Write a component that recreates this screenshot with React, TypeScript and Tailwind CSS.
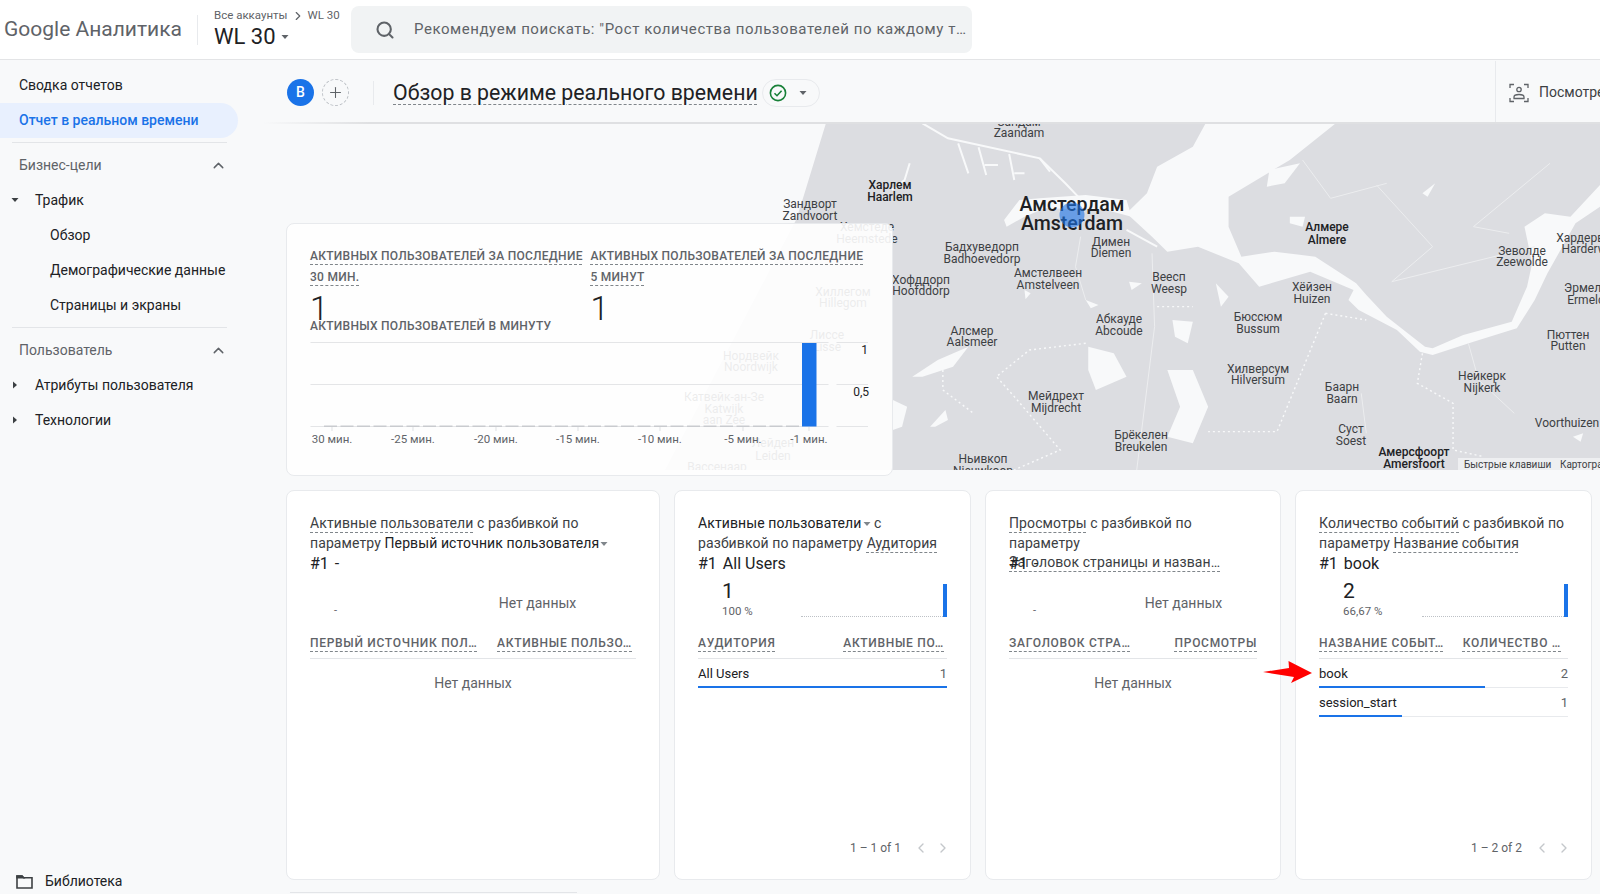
import type { ReactNode } from "react";
import { ChevronLeft, ChevronRight, ChevronUp, Plus, Search } from "lucide-react";

const BLUE = "#1a73e8";

function Caret({ right = false }: { right?: boolean }) {
  return (
    <svg width="8" height="8" viewBox="0 0 8 8" className="inline-block shrink-0" fill="currentColor">
      {right ? <path d="M2 0.5 6 4 2 7.5z" /> : <path d="M0.5 2h7L4 6z" />}
    </svg>
  );
}

function Dashed({ children }: { children: ReactNode }) {
  return (
    <span className="underline decoration-dashed decoration-[#80868b] decoration-1 underline-offset-[4px]">
      {children}
    </span>
  );
}

/* ── Sidebar ─────────────────────────────────────────────────────── */
function NavRow({
  children,
  indent,
  caret,
}: {
  children: ReactNode;
  indent: string;
  caret?: "down" | "right";
}) {
  return (
    <div className={`relative flex h-[35px] items-center text-[#202124] ${indent}`}>
      {caret && (
        <span className="absolute left-[11px] top-[13px] flex text-[#3c4043]">
          <Caret right={caret === "right"} />
        </span>
      )}
      {children}
    </div>
  );
}

function NavHeading({ children }: { children: ReactNode }) {
  return (
    <div className="flex h-[35px] items-center justify-between pl-[19px] pr-[35px] text-[#5f6368]">
      {children}
      <ChevronUp size={17} strokeWidth={2} className="text-[#5f6368]" />
    </div>
  );
}

function Sidebar() {
  return (
    <aside className="flex w-[262px] shrink-0 flex-col pt-[8px] font-['Roboto',sans-serif] text-[14px]">
      <NavRow indent="pl-[19px]">Сводка отчетов</NavRow>
      <div className="flex h-[35px] w-[238px] items-center rounded-r-[18px] bg-[#e8f0fe] pl-[19px] font-medium text-[#1a73e8]">
        Отчет в реальном времени
      </div>
      <div className="ml-[12px] mt-[4px] mb-[5px] h-px w-[215px] bg-[#e3e5e8]" />
      <NavHeading>Бизнес-цели</NavHeading>
      <NavRow indent="pl-[35px]" caret="down">Трафик</NavRow>
      <NavRow indent="pl-[50px]">Обзор</NavRow>
      <NavRow indent="pl-[50px]">Демографические данные</NavRow>
      <NavRow indent="pl-[50px]">Страницы и экраны</NavRow>
      <div className="ml-[12px] mt-[4px] mb-[5px] h-px w-[215px] bg-[#e3e5e8]" />
      <NavHeading>Пользователь</NavHeading>
      <NavRow indent="pl-[35px]" caret="right">Атрибуты пользователя</NavRow>
      <NavRow indent="pl-[35px]" caret="right">Технологии</NavRow>
      <div className="mt-auto mb-[3px] flex h-[20px] items-center gap-[12px] pl-[16px] text-[#202124]">
        <svg width="17" height="15" viewBox="0 0 17 15" fill="none" stroke="#3c4043" strokeWidth="1.6">
          <path d="M1 2h5l1.6 1.8H16V14H1z" />
          <path d="M1 2h5l1.6 1.8H1z" fill="#3c4043" />
        </svg>
        Библиотека
      </div>
    </aside>
  );
}

/* ── Map ─────────────────────────────────────────────────────────── */
type MapLabel = [string, string, number, number, number, number];

const LABELS: MapLabel[] = [
  ["Зандам", "Zaandam", 1019, 122, 133, 0],
  ["Харлем", "Haarlem", 890, 185, 197, 1],
  ["Зандворт", "Zandvoort", 810, 204, 216, 0],
  ["Димен", "Diemen", 1111, 242, 253, 0],
  ["Бадхуведорп", "Badhoevedorp", 982, 247, 259, 0],
  ["Хофддорп", "Hoofddorp", 921, 280, 291, 0],
  ["Амстелвеен", "Amstelveen", 1048, 273, 285, 0],
  ["Веесп", "Weesp", 1169, 277, 289, 0],
  ["Абкауде", "Abcoude", 1119, 319, 331, 0],
  ["Алсмер", "Aalsmeer", 972, 331, 342, 0],
  ["Бюссюм", "Bussum", 1258, 317, 329, 0],
  ["Хилверсум", "Hilversum", 1258, 369, 380, 0],
  ["Мейдрехт", "Mijdrecht", 1056, 396, 408, 0],
  ["Брёкелен", "Breukelen", 1141, 435, 447, 0],
  ["Ньивкоп", "Nieuwkoop", 983, 459, 471, 0],
  ["Алмере", "Almere", 1327, 227, 240, 1],
  ["Хёйзен", "Huizen", 1312, 287, 299, 0],
  ["Зеволде", "Zeewolde", 1522, 251, 262, 0],
  ["Хардервейк", "Harderwijk", 1590, 238, 249, 0],
  ["Эрмело", "Ermelo", 1586, 288, 300, 0],
  ["Пюттен", "Putten", 1568, 335, 346, 0],
  ["Нейкерк", "Nijkerk", 1482, 376, 388, 0],
  ["Баарн", "Baarn", 1342, 387, 399, 0],
  ["Суст", "Soest", 1351, 429, 441, 0],
  ["Амерсфоорт", "Amersfoort", 1414, 452, 464, 1],
  ["Хемстеде", "Heemstede", 867, 227, 239, 0],
  ["Хиллегом", "Hillegom", 843, 292, 303, 0],
  ["Лиссе", "Lisse", 827, 335, 347, 0],
  ["Нордвейк", "Noordwijk", 751, 356, 367, 0],
  ["Лейден", "Leiden", 773, 443, 456, 0],
  ["Вассенаар", "Wassenaar", 717, 467, 479, 0],
];

function MapPanel() {
  return (
    <svg
      viewBox="640 123 960 347"
      className="absolute -top-px right-0 h-[347px] w-[960px] font-['Roboto',sans-serif]"
    >
      <path d="M826 123 804 195 796 220 665 470H1600V123z" fill="#dcdde1" />
      {/* water, plotted in a 1.96 x 3 grid from (800,60) */}
      <g transform="translate(800 60) scale(0.5102 0.3333)" fill="#f8f9fa">
        <path d="M795 190H1050L960 300 840 410 840 500 865 590 930 575 1010 590 1090 670 1110 705 1150 770 1225 860 1240 865 1300 825 1395 785 1425 680 1435 610 1420 500 1460 460 1510 470 1568 375V440L1520 490 1465 640 1440 720 1405 805 1320 845 1240 885 1215 875 1170 810 1095 750 1075 720 1085 690 1000 635 900 680 860 610 780 560 720 575 690 530 640 460 680 400 700 320 770 260z" />
        <path d="M400 480 430 420 470 415 560 405 640 420 650 470 600 450 480 445 440 470 405 500z" />
        <path d="M565 860 615 880 640 950 580 990 565 930z" />
        <path d="M220 950 270 900 330 860 300 920 240 950z" />
        <path d="M182 1020 210 1040 200 1100 182 1110z" />
        <path d="M730 780 770 785 760 850 735 830z" />
        <path d="M720 930 770 930 800 1040 770 1150 720 1130 745 1040z" />
        <path d="M960 470 990 470 985 500 960 490z" />
        <path d="M920 330 980 310 950 370 915 380z" />
        <path d="M815 670 840 710 825 740z" />
        <path d="M1220 400 1245 370 1230 410z" />
        <path d="M560 720 585 735 570 745z" />
        <path d="M255 1100 285 1050 290 1080 265 1100z" />
        <path d="M440 690 452 700 442 718z" />
        <path d="M645 665 670 670 650 690z" />
        <path d="M1515 1130 1535 1120 1530 1145z" />
        <g fill="none" stroke="#f8f9fa" strokeWidth="2">
          <path d="M240 190 290 235 470 295 520 370 545 410" vectorEffect="non-scaling-stroke" />
          <path d="M310 250 330 340M350 262 365 345M362 315H388M410 282 420 360M420 340H440M470 295 490 335" vectorEffect="non-scaling-stroke" />
          <path d="M215 310 205 360 180 390" vectorEffect="non-scaling-stroke" />
          <path d="M640 510 700 560" vectorEffect="non-scaling-stroke" />
        </g>
        <g fill="none" stroke="#ecedef" strokeWidth="1">
          <path d="M690 580 695 800 660 1230" vectorEffect="non-scaling-stroke" />
          <path d="M985 300 1040 415 1150 370M1130 375 1240 560 1160 665 1440 560" vectorEffect="non-scaling-stroke" />
          <path d="M1470 310 1320 500 1390 520M550 530 540 620 560 720" vectorEffect="non-scaling-stroke" />
          <path d="M1310 850 1330 960 1400 1060M1100 1000 1110 1120" vectorEffect="non-scaling-stroke" />
        </g>
        <g fill="none" stroke="#f8f9fa" strokeWidth="1.4" strokeDasharray="2 3">
          <path d="M1030 760 1110 780M1030 760 935 1115 800 1115" vectorEffect="non-scaling-stroke" />
          <path d="M1220 880 1210 970 1280 1030 1280 1170 1340 1190" vectorEffect="non-scaling-stroke" />
          <path d="M700 740 770 740M560 850 450 870 385 950 420 1010 510 1170 420 1230" vectorEffect="non-scaling-stroke" />
          <path d="M280 930 280 990 340 1060" vectorEffect="non-scaling-stroke" />
        </g>
      </g>

      {LABELS.map(([ru, en, x, y1, y2, strong]) => (
        <g
          key={en}
          textAnchor="middle"
          fontSize="12"
          fontWeight={strong ? 500 : 400}
          fill={strong ? "#202124" : "#3c4043"}
        >
          <text x={x} y={y1 + 4}>{ru}</text>
          <text x={x} y={y2 + 4}>{en}</text>
        </g>
      ))}
      <g textAnchor="middle" fontSize="12" fill="#3c4043">
        <text x="724" y="401">Катвейк-ан-Зе</text>
        <text x="724" y="413">Katwijk</text>
        <text x="724" y="424">aan Zee</text>
        <text x="1567" y="427">Voorthuizen</text>
      </g>
      <g textAnchor="middle" fontSize="19.5" fontWeight="500" fill="#202124">
        <text x="1072" y="211">Амстердам</text>
        <text x="1072" y="230">Amsterdam</text>
      </g>
      <circle cx="1072" cy="215" r="12.5" fill={BLUE} fillOpacity="0.6" />
      <rect x="1458" y="458" width="142" height="12" fill="#f1f2f3" fillOpacity="0.85" />
      <g fontSize="10" fill="#3c4043">
        <text x="1464" y="468">Быстрые клавиши</text>
        <text x="1560" y="468">Картографические данные</text>
      </g>
    </svg>
  );
}

/* ── Realtime card ───────────────────────────────────────────────── */
const TICKS: [string, number][] = [
  ["30 мин.", 331],
  ["-25 мин.", 412],
  ["-20 мин.", 495],
  ["-15 мин.", 577],
  ["-10 мин.", 659],
  ["-5 мин.", 742],
  ["-1 мин.", 808],
];

function MinuteChart() {
  const bars = Array.from({ length: 29 }, (_, i) => 323 + i * 16.5);
  return (
    <svg viewBox="309 336 560 112" className="block h-[112px] w-[560px] font-['Roboto',sans-serif]">
      {[342.5, 384.5, 426.5].map((y) => (
        <g key={y} stroke="#e4e5e7">
          <line x1="309.5" x2="827.5" y1={y} y2={y} />
          <line x1="835.5" x2="867" y1={y} y2={y} />
        </g>
      ))}
      {bars.map((x) => (
        <rect key={x} x={x} y="425.5" width="13" height="1.5" fill="#c9cbcf" />
      ))}
      {TICKS.map(([, x]) => (
        <line key={x} x1={x} x2={x} y1="427" y2="431" stroke="#dfe1e4" />
      ))}
      <rect x="801" y="343" width="14.5" height="83.5" fill={BLUE} />
      <g fontSize="12" fill="#202124" textAnchor="end">
        <text x="867" y="354">1</text>
        <text x="868" y="396">0,5</text>
      </g>
      <g fontSize="11.5" fill="#5f6368" textAnchor="middle">
        {TICKS.map(([label, x]) => (
          <text key={x} x={x} y="443">{label}</text>
        ))}
      </g>
    </svg>
  );
}

function CounterCol({ line1, line2 }: { line1: string; line2: string }) {
  return (
    <div>
      <div className="whitespace-nowrap text-[12px] font-medium leading-[20.5px] tracking-[0.27px] text-[#5f6368]">
        <Dashed>{line1}</Dashed>
        <br />
        <Dashed>{line2}</Dashed>
      </div>
      <div className="h-[29px] text-[33px] font-light leading-[44px] text-[#202124]">1</div>
    </div>
  );
}

function RealtimeCard() {
  return (
    <section className="relative ml-[24px] mt-[99px] h-[253px] w-[607px] rounded-lg border border-[#e8eaed] bg-white/90 px-[23px] pt-[22px]">
      <div className="grid grid-cols-[280.5px_1fr]">
        <CounterCol line1="АКТИВНЫХ ПОЛЬЗОВАТЕЛЕЙ ЗА ПОСЛЕДНИЕ" line2="30 МИН." />
        <CounterCol line1="АКТИВНЫХ ПОЛЬЗОВАТЕЛЕЙ ЗА ПОСЛЕДНИЕ" line2="5 МИНУТ" />
      </div>
      <div className="h-[20px] text-[12px] font-medium leading-[20px] tracking-[0.27px] text-[#5f6368]">
        АКТИВНЫХ ПОЛЬЗОВАТЕЛЕЙ В МИНУТУ
      </div>
      <MinuteChart />
    </section>
  );
}

/* ── Breakdown cards ─────────────────────────────────────────────── */
interface Row {
  name: string;
  value: number;
  share: number;
}

interface BreakdownProps {
  title: ReactNode;
  top: string;
  metric?: { value: string; pct: string };
  leftCol: string;
  headers: [string, string];
  headerClass?: string;
  rows: Row[];
  pager?: string;
}

function BreakdownCard({ title, top, metric, leftCol, headers, headerClass, rows, pager }: BreakdownProps) {
  return (
    <section className="flex h-[390px] flex-col rounded-lg border border-[#e8eaed] bg-white px-[23px] pt-[23px] pb-[22px] text-[#3c4043]">
      <div className="h-[40px] whitespace-nowrap text-[14px] leading-[19.7px] tracking-[0.1px]">{title}</div>
      <div className="flex h-[20px] gap-[6px] text-[16px] leading-[20px] text-[#202124]">
        <span>#1</span>
        <span>{top}</span>
      </div>
      <div className="flex h-[60px]">
        <div className={`pl-[24px] ${leftCol}`}>
          {metric ? (
            <>
              <div className="mt-[4px] text-[21px] leading-[26px] text-[#202124]">{metric.value}</div>
              <div className="text-[11.5px] leading-[14px] text-[#5f6368]">{metric.pct}</div>
            </>
          ) : (
            <div className="mt-[30px] text-[11px] leading-[14px] text-[#5f6368]">-</div>
          )}
        </div>
        {metric ? (
          <div className="mt-[10px] flex h-[33px] flex-1 items-end">
            <div className="flex-1 border-b border-dotted border-[#bdc1c6]" />
            <div className="h-[33px] w-[4px] bg-[#1a73e8]" />
          </div>
        ) : (
          <div className="mt-[19px] flex-1 text-center text-[14px] leading-[20px] text-[#5f6368]">Нет данных</div>
        )}
      </div>
      <div className={`flex h-[25px] justify-between border-b border-[#e3e5e8] text-[12px] font-medium leading-[18px] tracking-[0.7px] text-[#5f6368] ${headerClass ?? ""}`}>
        <Dashed>{headers[0]}</Dashed>
        <Dashed>{headers[1]}</Dashed>
      </div>
      {rows.length === 0 ? (
        <div className="mt-[14px] text-center text-[14px] leading-[20px] text-[#5f6368]">Нет данных</div>
      ) : (
        rows.map((r) => (
          <div key={r.name} className="relative h-[29px] border-b border-[#e8eaed] text-[13px] leading-[29px] text-[#202124]">
            <div className="flex justify-between">
              <span>{r.name}</span>
              <span className="text-[#5f6368]">{r.value}</span>
            </div>
            <div className="absolute -bottom-px left-0 h-[2px] bg-[#1a73e8]" style={{ width: `${r.share}%` }} />
          </div>
        ))
      )}
      {pager && (
        <div className="-mr-[4px] mt-auto flex items-center justify-end text-[12px] text-[#5f6368]">
          <span className="mr-[12px]">{pager}</span>
          <ChevronLeft size={16} className="mr-[6px] text-[#c4c7cb]" />
          <ChevronRight size={16} className="text-[#c4c7cb]" />
        </div>
      )}
    </section>
  );
}

const Dim = ({ children }: { children: ReactNode }) => (
  <span className="text-[#202124]">{children}</span>
);

function Cards() {
  return (
    <div className="ml-[24px] mt-[14px] grid w-[1306px] grid-cols-[374px_297px_296px_297px] gap-[14px]">
      <BreakdownCard
        title={
          <>
            <Dashed>Активные пользователи</Dashed> с разбивкой по
            <br />
            параметру <Dim>Первый источник пользователя</Dim>
            <span className="ml-px text-[#80868b]"><Caret /></span>
          </>
        }
        top="-"
        leftCol="w-[129px]"
        headers={["ПЕРВЫЙ ИСТОЧНИК ПОЛ…", "АКТИВНЫЕ ПОЛЬЗО…"]}
        headerClass="pr-[4px]"
        rows={[]}
      />
      <BreakdownCard
        title={
          <>
            <Dim>Активные пользователи</Dim>
            <span className="ml-px text-[#80868b]"><Caret /></span> с
            <br />
            разбивкой по параметру <Dashed>Аудитория</Dashed>
          </>
        }
        top="All Users"
        metric={{ value: "1", pct: "100 %" }}
        leftCol="w-[103px]"
        headers={["АУДИТОРИЯ", "АКТИВНЫЕ ПО…"]}
        headerClass="pr-[3px]"
        rows={[{ name: "All Users", value: 1, share: 100 }]}
        pager="1 – 1 of 1"
      />
      <BreakdownCard
        title={
          <>
            <Dashed>Просмотры</Dashed> с разбивкой по
            <br />
            параметру
            <br />
            <Dashed>Заголовок страницы и назван…</Dashed>
          </>
        }
        top="-"
        leftCol="w-[101px]"
        headers={["ЗАГОЛОВОК СТРА…", "ПРОСМОТРЫ"]}
        rows={[]}
      />
      <BreakdownCard
        title={
          <>
            <Dashed>Количество событий</Dashed> с разбивкой по
            <br />
            параметру <Dashed>Название события</Dashed>
          </>
        }
        top="book"
        metric={{ value: "2", pct: "66,67 %" }}
        leftCol="w-[103px]"
        headers={["НАЗВАНИЕ СОБЫТ…", "КОЛИЧЕСТВО …"]}
        headerClass="pr-[7px]"
        rows={[
          { name: "book", value: 2, share: 66.67 },
          { name: "session_start", value: 1, share: 33.33 },
        ]}
        pager="1 – 2 of 2"
      />
    </div>
  );
}

/* ── Top bars ────────────────────────────────────────────────────── */
function Header() {
  return (
    <header className="flex h-[60px] shrink-0 items-center border-b border-[#e3e4e6] bg-white font-['Roboto',sans-serif]">
      <div className="w-[197px] whitespace-nowrap pl-[4px] text-[21px] text-[#5f6368]">Google Аналитика</div>
      <div className="h-[30px] w-px bg-[#e8eaed]" />
      <div className="ml-[16px] w-[137px]">
        <div className="flex items-center gap-[3px] text-[11.5px] leading-[15px] text-[#5f6368]">
          Все аккаунты <ChevronRight size={14} /> WL 30
        </div>
        <div className="flex items-center gap-[5px] text-[22px] leading-[28px] text-[#202124]">
          WL 30
          <span className="flex text-[#5f6368]"><Caret /></span>
        </div>
      </div>
      <div className="flex h-[47px] w-[621px] items-center rounded-lg bg-[#f1f3f4] pl-[24px] text-[15px] tracking-[0.56px] text-[#5f6368]">
        <Search size={20} strokeWidth={2.5} className="mr-[19px] shrink-0" />
        <span className="truncate">Рекомендуем поискать: "Рост количества пользователей по каждому т…</span>
      </div>
    </header>
  );
}

function Toolbar() {
  return (
    <div className="relative z-10 flex h-[64px] shrink-0 items-center bg-[#f8f9fa] pl-[25px] pt-px font-['Roboto',sans-serif]">
      <div className="flex h-[27px] w-[27px] items-center justify-center rounded-full bg-[#1a73e8] text-[14px] font-medium text-white">B</div>
      <div className="ml-[8px] flex h-[27px] w-[27px] items-center justify-center rounded-full border border-dashed border-[#bdc1c6] text-[#5f6368]">
        <Plus size={17} strokeWidth={1.5} />
      </div>
      <div className="ml-[24px] h-[24px] w-px bg-[#e8eaed]" />
      <h1 className="ml-[19px] whitespace-nowrap text-[21.3px] font-normal leading-[28px] text-[#202124]">
        <Dashed>Обзор в режиме реального времени</Dashed>
      </h1>
      <div className="ml-[4px] flex h-[28px] w-[58px] items-center rounded-full border border-[#e8eaed] pl-[6px]">
        <svg width="18" height="18" viewBox="0 0 18 18" fill="none" stroke="#188038" strokeWidth="1.6">
          <circle cx="9" cy="9" r="7.6" />
          <path d="M5.5 9.2 8 11.7l4.6-5" />
        </svg>
        <span className="ml-[12px] flex text-[#5f6368]"><Caret /></span>
      </div>
      <div className="ml-auto flex h-full w-[105px] shrink-0 items-center whitespace-nowrap border-l border-[#e8eaed] pl-[13px] text-[14px] text-[#3c4043]">
        <svg width="20" height="20" viewBox="0 0 20 20" fill="none" stroke="#5f6368" strokeWidth="1.3" className="mr-[10px] shrink-0">
          <path d="M1 5V1.5h4M15 1.5h4V5M1 15v3.5h4M15 18.500h4V15" />
          <circle cx="10" cy="6.500" r="2.200" />
          <path d="M5 15.500v-1.500c0-1.500 2.500-2.500 5-2.500s5 1 5 2.500v1.500z" />
        </svg>
        Посмотреть
      </div>
      <div className="absolute bottom-0 left-0 right-0 h-[2px] bg-gradient-to-r from-transparent to-[#dfe0e2] to-[8%]" />
    </div>
  );
}

export default function App() {
  return (
    <div className="relative flex h-[894px] w-[1600px] flex-col overflow-hidden bg-[#f8f9fa] font-['Roboto',sans-serif]">
      <Header />
      <div className="flex min-h-0 flex-1">
        <Sidebar />
        <main className="min-w-0 flex-1">
          <Toolbar />
          <div className="relative h-[352px] overflow-hidden">
            <MapPanel />
            <RealtimeCard />
          </div>
          <Cards />
          <div className="ml-[28px] mt-[12px] h-px w-[287px] bg-[#e3e5e8]" />
        </main>
      </div>
      {/* annotation arrow pasted over the screenshot */}
      <svg width="50" height="24" viewBox="0 0 50 24" className="absolute left-[1263px] top-[660px]">
        <path d="M0 12 26 8 25.500 1 49 13 28 23 31 17z" fill="#f00" />
      </svg>
    </div>
  );
}
